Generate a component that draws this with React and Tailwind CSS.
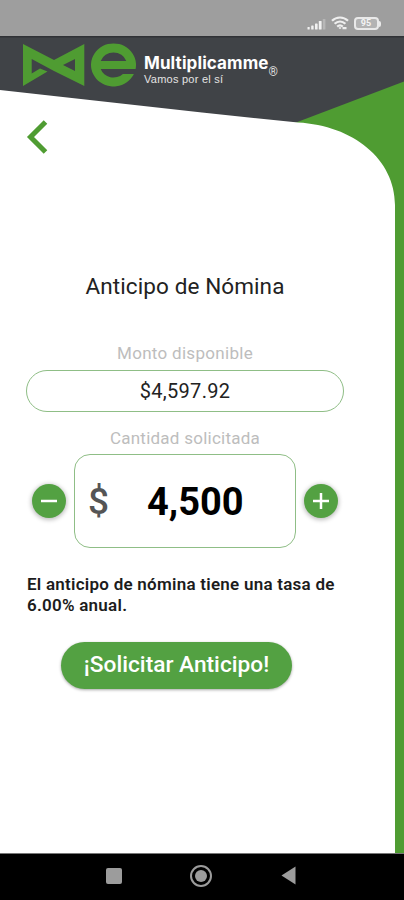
import React, { useState } from 'react';

const StatusBar = () => (
  <div className="relative flex h-9 shrink-0 items-end justify-end gap-[5px] bg-[#9e9e9e] pr-[23px] pb-[6px]">
    <svg width="19" height="12" viewBox="0 0 19 12" fill="#f1f1f1">
      <rect x="0.5" y="9" width="2.2" height="2.5" rx="0.6" />
      <rect x="4.2" y="7.5" width="2.4" height="4" rx="0.6" />
      <rect x="8" y="5.5" width="2.6" height="6" rx="0.6" />
      <rect x="11.8" y="3" width="2.8" height="8.5" rx="0.6" />
      <rect x="15.8" y="1" width="2.6" height="10.5" rx="0.6" fill="#b7b7b7" />
    </svg>
    <svg width="18" height="14" viewBox="0 0 18 14" fill="none" stroke="#efefef" strokeWidth="2.2">
      <path d="M1 4.8C5.5 0.4 12.5 0.4 17 4.8" />
      <path d="M3.6 7.8C6.8 4.8 11.2 4.8 14.4 7.8" />
      <path d="M6.2 10.6C8 9 10 9 11.8 10.6" />
      <path d="M9 11.2v1.6M11.5 12.2h4" />
    </svg>
    <div className="flex items-center">
      <div className="flex h-[13px] w-[25px] items-center justify-center rounded-[4px] border-2 border-[#e9e9e9] bg-[#b3b3b3] text-[9px] leading-none font-bold text-[#f4f4f4]">
        95
      </div>
      <div className="h-[6px] w-[2.5px] rounded-r bg-[#e9e9e9]" />
    </div>
  </div>
);

const Backdrop = () => (
  <svg className="absolute inset-0" width="404" height="817" viewBox="0 0 404 817">
    <rect width="404" height="817" fill="#4f9c32" />
    <path d="M0 0H404V45.500L296 86.500L0 80Z" fill="#404347" />
    <path d="M0 54L202 76.500L298 86.500C353 89.500 395 123 395 169V817H0Z" fill="#fff" />
    <rect width="404" height="1.500" fill="#303236" />
  </svg>
);

const Logo = () => (
  <div className="flex h-14 pt-[7px] pl-[23px]">
    <svg width="114" height="46" viewBox="0 0 114 46" fill="#4f9c32" fillRule="evenodd" className="shrink-0">
      <path d="M0 1L31 17L61.300 1V43L31 28L8.700 16V30.500L17 25.500L24.500 28.500L0 43ZM40 22L52 28V16Z" />
      <path d="M112.600 26A22.500 21.500 0 1 0 110.900 31H99.900A13.500 12.500 0 0 1 77.700 26ZM77.700 18A13.500 12.500 0 0 1 103.300 18Z" />
    </svg>
    <div className="ml-[7px] pt-[10px] text-white">
      <div className="flex">
        <span className="font-[Inter] text-[17px] leading-[20px] font-bold tracking-[0.1px]">Multiplicamme</span>
        <span className="pt-[13px] text-[12px] leading-3 text-[#ddd]">®</span>
      </div>
      <div className="-mt-[5px] font-['Liberation_Sans'] text-[11px] leading-3 tracking-[0.25px] text-[#e4e4e4]">
        Vamos por el sí
      </div>
    </div>
  </div>
);

const RoundButton = ({ onClick, label, d }) => (
  <button
    type="button"
    aria-label={label}
    onClick={onClick}
    className="flex size-[34px] items-center justify-center rounded-full bg-[#53a142] shadow-[0_1px_4px_1px_rgba(0,0,0,0.25)]"
  >
    <svg width="18" height="18" viewBox="0 0 18 18" stroke="#fff" strokeWidth="2.500" fill="none">
      <path d={d} />
    </svg>
  </button>
);

const NavBar = () => (
  <div className="flex h-[48px] shrink-0 items-center border-t-2 border-[#777] bg-black pb-[3px] pl-[106px]">
    <div className="size-4 rounded-[2px] bg-[#9c9c9c]" />
    <div className="ml-[68px] flex size-[22px] items-center justify-center rounded-full border-2 border-[#9c9c9c]">
      <div className="size-3 rounded-full bg-[#9c9c9c]" />
    </div>
    <svg className="ml-[69px]" width="15" height="19" viewBox="0 0 15 19">
      <path d="M0.500 9.500L14.500 0.500V18.500Z" fill="#9c9c9c" />
    </svg>
  </div>
);

const App = () => {
  const [amount, setAmount] = useState(4500);

  return (
    <div className="flex h-[900px] w-[404px] flex-col overflow-hidden bg-white font-[Roboto,sans-serif]">
      <StatusBar />
      <div className="relative min-h-0 flex-1">
        <Backdrop />
        <div className="relative">
          <Logo />
          <button type="button" aria-label="Regresar" className="mt-[27px] ml-[26px] block">
            <svg width="22" height="36" viewBox="0 0 22 36" fill="none" stroke="#4f9c32" strokeWidth="5">
              <path d="M19.500 3L4.500 18L19.500 33" />
            </svg>
          </button>

          <div className="ml-[26px] flex w-[318px] flex-col items-center">
            <h1 className="mt-[117px] text-[22.500px] leading-[28px] tracking-[0.1px] whitespace-nowrap text-[#222]">
              Anticipo de Nómina
            </h1>
            <label className="mt-[43px] text-[17px] leading-5 tracking-[0.3px] text-[#bdbdbd]">Monto disponible</label>
            <div className="mt-[7px] flex h-[42px] w-full items-center justify-center rounded-full border border-[#8fbe86] text-[20px] tracking-[0.3px] text-[#222]">
              $4,597.92
            </div>
            <label className="mt-[16px] text-[17px] leading-5 tracking-[0.25px] text-[#bdbdbd]">
              Cantidad solicitada
            </label>
            <div className="mt-[6px] flex w-full items-center justify-center gap-[8px]">
              <RoundButton label="Menos" d="M1 9H17" onClick={() => setAmount(amount - 100)} />
              <div className="flex h-[94px] w-[222px] items-center rounded-[16px] border border-[#8fbe86]">
                <span className="ml-[13px] pt-[2px] text-[37px] font-medium text-[#555]">$</span>
                <span className="ml-[38px] pt-[2px] text-[38px] font-bold text-black">
                  {amount.toLocaleString('en-US')}
                </span>
              </div>
              <RoundButton label="Más" d="M1 9H17M9 1V17" onClick={() => setAmount(amount + 100)} />
            </div>
            <p className="mt-[26px] w-full pl-px text-[17px] leading-[20.500px] font-semibold tracking-[0.25px] whitespace-nowrap text-[#1c1c1c]">
              El anticipo de nómina tiene una tasa de
              <br />
              6.00% anual.
            </p>
            <button
              type="button"
              className="mt-[27px] ml-[35px] h-[47px] w-[231px] self-start rounded-full bg-[#53a142] pb-px text-[22.700px] font-medium whitespace-nowrap text-white shadow-[0_1px_3px_rgba(0,0,0,0.35)]"
            >
              ¡Solicitar Anticipo!
            </button>
          </div>
        </div>
      </div>
      <NavBar />
    </div>
  );
};

export default App;
